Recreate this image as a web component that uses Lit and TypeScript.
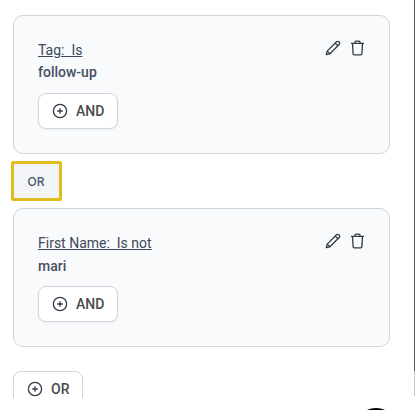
import { LitElement, html, css, svg } from "lit";
import { customElement } from "lit/decorators.js";

const plus = svg`<circle cx="8" cy="8" r="6.6" fill="none" stroke="#343a46" stroke-width="1.3"/><path d="M8 5.2v5.6M5.2 8h5.6" stroke="#343a46" stroke-width="1.3" fill="none"/>`;

@customElement("app-root")
export class AppRoot extends LitElement {
  static styles = css`
    :host { display: block; width: 415px; height: 410px; position: relative; overflow: hidden; background: #fff; font-family: Roboto, "Liberation Sans", sans-serif; color: #344054; }
    .clip { height: 398px; overflow: hidden; padding: 15px 25px 0 13px; box-sizing: border-box; display: flex; flex-direction: column; align-items: flex-start; }
    .card { box-sizing: border-box; width: 377px; height: 139px; flex: none; border: 1px solid #d0d5dd; border-radius: 10px; background: #f9fafb; padding: 24px 24px 0; display: flex; justify-content: space-between; align-items: flex-start; }
    .title { font-size: 14px; line-height: 20px; text-decoration: underline; white-space: pre; color: #3d4859; }
    .value { font-size: 14px; line-height: 20px; font-weight: 500; margin-top: 2.4px; color: #455064; }
    .btn { box-sizing: border-box; display: flex; align-items: center; gap: 8px; height: 36px; border: 1px solid #d0d5dd; border-radius: 8px; background: #fff; font-size: 14px; font-weight: 500; color: #4a4a4a; box-shadow: 0 1px 2px rgba(16,24,40,.05); }
    .and { width: 80px; margin-top: 10.6px; padding-left: 13px; }
    .orbtn { width: 70px; flex: none; padding-left: 13px; margin-top: 23.8px; }
    .icons { display: flex; gap: 9px; }
    .orbox { box-sizing: border-box; width: 51px; height: 40px; flex: none; margin: 7px 0 7.2px -2px; padding-right: 1px; border: 3px solid #e0bd1c; border-radius: 2px; background: #f2f4f7; font-family: Inter, Roboto, sans-serif; font-size: 12px; font-weight: 500; display: flex; align-items: center; justify-content: center; color: #475467; }
    svg { display: block; flex: none; }
    .bar { position: absolute; right: 0; top: 0; width: 1px; height: 371px; background: #5a5a5a; }
    .bar2 { position: absolute; right: 0; top: 371px; width: 1px; height: 25px; background: #c8c8c8; }
    .blob { position: absolute; left: 364px; top: 408px; width: 24px; height: 12px; border-radius: 50%; background: #000; }
  `;

  private card(title: string, value: string) {
    return html`<div class="card">
      <div>
        <div class="title">${title}</div>
        <div class="value">${value}</div>
        <div class="btn and"><svg width="16" height="16" viewBox="0 0 16 16">${plus}</svg>AND</div>
      </div>
      <div class="icons">
        <svg width="16" height="16" viewBox="0 0 16 16" fill="none" stroke="#343a46" stroke-width="1.3" stroke-linejoin="round"><path d="M1.3 14.7l.9-3.6L11.5 1.8a1.6 1.6 0 0 1 2.3 0l.4.4a1.6 1.6 0 0 1 0 2.3L4.9 13.8z"/><path d="M2.2 11.1l2.7 2.7M10.2 3.1l2.7 2.7"/></svg>
        <svg width="15" height="16" viewBox="0 0 15 16" fill="none" stroke="#343a46" stroke-width="1.3" stroke-linejoin="round"><path d="M1 3.4h13M5 3.4V2.2a1 1 0 0 1 1-1h3a1 1 0 0 1 1 1v1.2M2.5 3.4l.6 10.2a1.3 1.3 0 0 0 1.3 1.2h6.2a1.3 1.3 0 0 0 1.3-1.2l.6-10.2"/></svg>
      </div>
    </div>`;
  }

  render() {
    return html`<div class="clip">
        ${this.card("Tag:  Is", "follow-up")}
        <div class="orbox">OR</div>
        ${this.card("First Name:  Is not", "mari")}
        <div class="btn orbtn"><svg width="16" height="16" viewBox="0 0 16 16">${plus}</svg>OR</div>
      </div>
      <div class="bar"></div><div class="bar2"></div><div class="blob"></div>`;
  }
}
